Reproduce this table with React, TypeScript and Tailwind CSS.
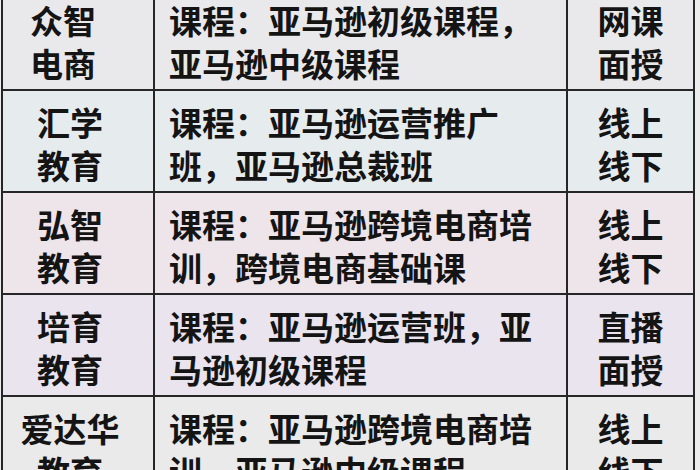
import React from 'react';

type Row = {
  name: string[];
  course: string;
  mode: string[];
  bg: string;
  nameCls?: string;
};

const rows: Row[] = [
  { name: ['众智', '电商'], course: '课程：亚马逊初级课程，亚马逊中级课程', mode: ['网课', '面授'], bg: 'bg-[#e9e9eb]', nameCls: 'pr-[30px]' },
  { name: ['汇学', '教育'], course: '课程：亚马逊运营推广班，亚马逊总裁班', mode: ['线上', '线下'], bg: 'bg-[#e6ebed]' },
  { name: ['弘智', '教育'], course: '课程：亚马逊跨境电商培训，跨境电商基础课', mode: ['线上', '线下'], bg: 'bg-[#eee5ea]' },
  { name: ['培育', '教育'], course: '课程：亚马逊运营班，亚马逊初级课程', mode: ['直播', '面授'], bg: 'bg-[#e9e4ee]' },
  { name: ['爱达华', '教育'], course: '课程：亚马逊跨境电商培训，亚马逊中级课程', mode: ['线上', '线下'], bg: 'bg-[#eaeaea]' },
];

export default function App() {
  return (
    <div
      className="w-[700px] h-[470px] overflow-hidden bg-[#ececec] text-[#141414]"
      style={{ fontFamily: '"Noto Sans CJK SC", "Noto Sans", sans-serif' }}
    >
      <div className="-mt-[11px] ml-[1px] w-[694px]">
        {rows.map((r, i) => (
          <div
            key={i}
            className={`grid grid-cols-[154px_413px_127px] h-[102px] border-b-2 border-[#262626] ${r.bg}`}
          >
            <div
              className={`flex flex-col items-center justify-center pt-[5px] border-l-2 border-r-2 border-[#262626] text-[33px] leading-[43px] font-bold ${r.nameCls ?? 'pr-[16px]'}`}
            >
              {r.name.map((n) => (
                <span key={n}>{n}</span>
              ))}
            </div>
            <div className="flex items-center pt-[5px] pl-[14px] pr-[20px] border-r-2 border-[#262626] text-[33px] leading-[43px] font-bold">
              <p>{r.course}</p>
            </div>
            <div className="flex flex-col items-center justify-center pt-[5px] border-r-2 border-[#262626] text-[33px] leading-[43px] font-bold">
              {r.mode.map((m) => (
                <span key={m}>{m}</span>
              ))}
            </div>
          </div>
        ))}
      </div>
    </div>
  );
}
